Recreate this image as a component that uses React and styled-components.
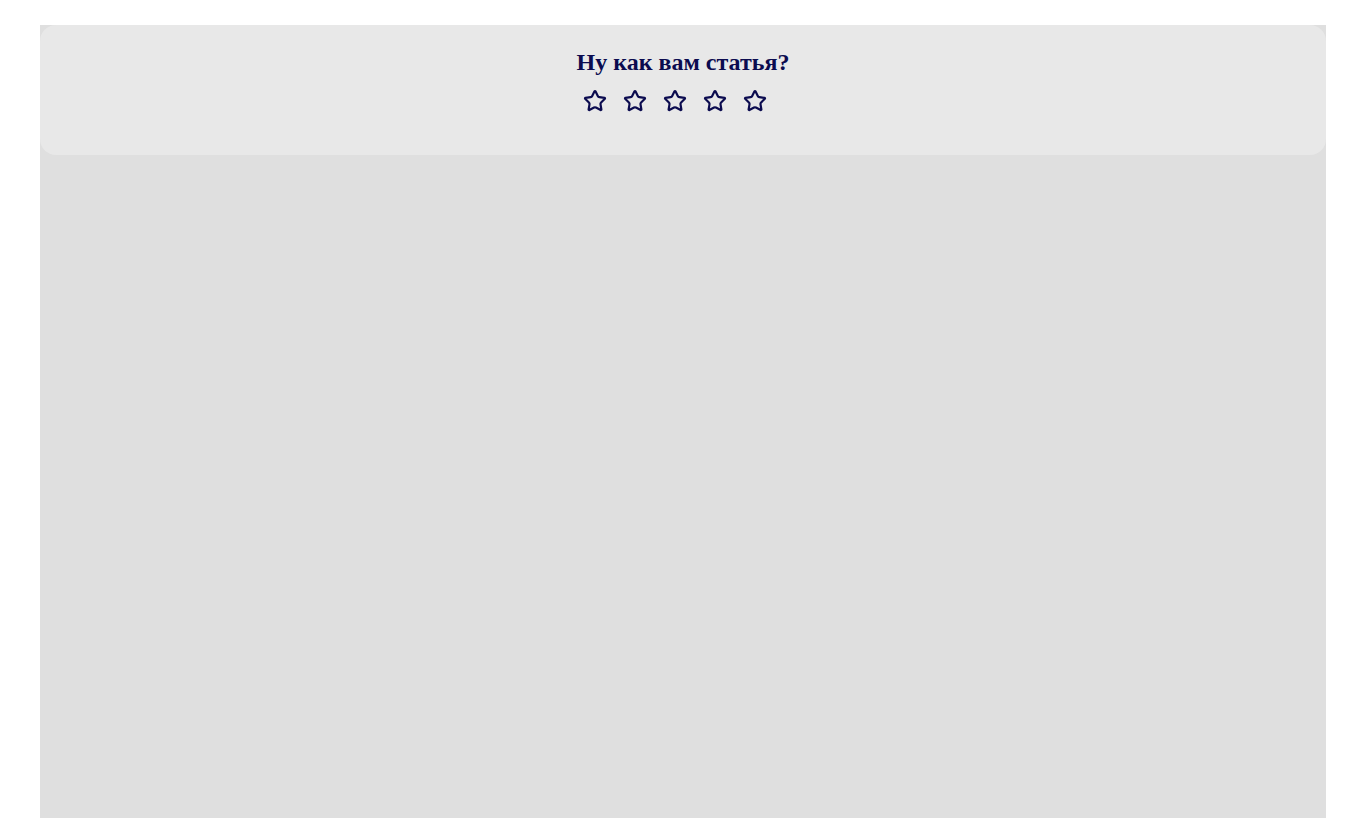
import React from 'react';
import styled, { createGlobalStyle } from 'styled-components';
import { Star } from 'lucide-react';

const GlobalStyle = createGlobalStyle`
    html, body {
        margin: 0;
        padding: 0;
        background: #ffffff;
        font-family: "Liberation Serif", "Times New Roman", serif;
    }
`

const Page = styled.div`
    padding: 25px 40px 0 40px;
    min-height: 100vh;
    box-sizing: border-box;
    display: flex;
    flex-direction: column;
`

const Article = styled.div`
    flex: 1;
    background: #dfdfdf;
    display: flex;
    flex-direction: column;
`

const RatingCard = styled.section`
    background: #e8e8e8;
    border-radius: 16px;
    height: 130px;
    box-sizing: border-box;
    padding-top: 23px;
    display: flex;
    flex-direction: column;
    align-items: center;
    color: #0b0b4f;
`

const Title = styled.h2`
    margin: 0;
    font-size: 24px;
    line-height: 28px;
    font-weight: bold;
`

const Stars = styled.div`
    display: flex;
    gap: 16px;
    margin-top: 13px;
    padding-right: 16px;
`

const StarButton = styled.button`
    width: 24px;
    height: 24px;
    padding: 0;
    border: none;
    background: none;
    cursor: pointer;
    color: #0b0b4f;
    display: flex;
`

const RATINGS = [1, 2, 3, 4, 5];

export default function App() {
    return (
        <>
            <GlobalStyle />
            <Page>
                <Article>
                    <RatingCard>
                        <Title>Ну как вам статья?</Title>
                        <Stars>
                            {RATINGS.map(r => (
                                <StarButton key={r} aria-label={`Оценка ${r}`}>
                                    <Star size={24} strokeWidth={2.2} />
                                </StarButton>
                            ))}
                        </Stars>
                    </RatingCard>
                </Article>
            </Page>
        </>
    );
}
